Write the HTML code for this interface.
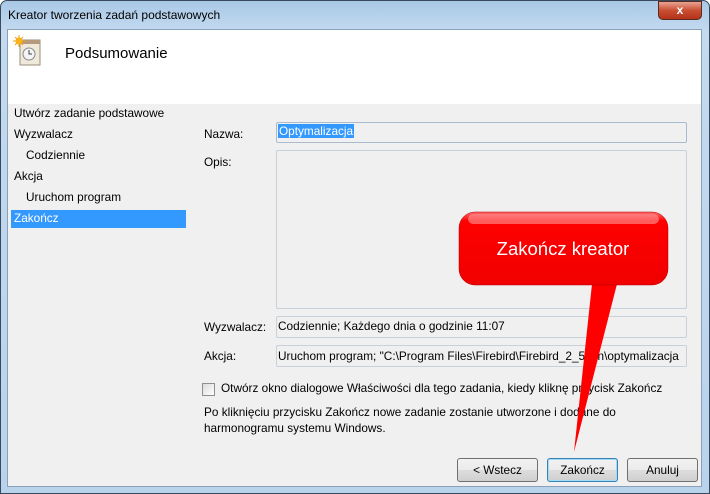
<!DOCTYPE html>
<html><head><meta charset="utf-8"><style>
*{margin:0;padding:0;box-sizing:border-box}
body{width:710px;height:494px;overflow:hidden;font-family:"Liberation Sans","DejaVu Sans",sans-serif;font-size:11.8px;color:#000;background:#fff}
.frame{position:absolute;left:0;top:0;width:710px;height:494px;background:linear-gradient(180deg,#a9c8e6 0,#c3daf0 30px,#b9d3ec 100%);border:1px solid #3a4a5c;border-radius:7px 7px 0 0}
.title{position:absolute;left:7px;top:7px;font-size:12px;color:#000}
.close{position:absolute;left:657px;top:0;width:44px;height:19px;border-radius:0 0 5px 5px;background:linear-gradient(#e8a493,#c94e32 50%,#b3331a);border:1px solid #5a2a20;color:#fff;font-weight:bold;text-align:center;font-size:12px;line-height:17px}
.client{position:absolute;left:7px;top:29px;width:695px;height:458px;background:#f0f0f0;border:1px solid #8aa0b8}
.head{position:absolute;left:0;top:0;width:100%;height:74px;background:#fff}
.t{position:absolute;white-space:nowrap}
.box{position:absolute;border:1px solid #c8d0d8;background:#f0f0f0;border-radius:2px}
.btn{position:absolute;height:24px;border:1px solid #707070;border-radius:3px;background:linear-gradient(#f2f2f2,#ebebeb 50%,#dddddd 51%,#cfcfcf);text-align:center;line-height:22px}
</style></head><body>
<div class="frame">
<div class="title">Kreator tworzenia zadań podstawowych</div>
<div class="close">x</div>
</div>
<div class="client">
<div class="head">
<svg style="position:absolute;left:5px;top:5px" width="30" height="32" viewBox="0 0 30 32">
<rect x="7" y="5" width="20" height="25" fill="#efe9dc" stroke="#9a8d78"/>
<rect x="7" y="5" width="20" height="4" fill="#b39b7b"/>
<circle cx="16" cy="19" r="6" fill="#f4f4f4" stroke="#888"/>
<path d="M16 15v4h3" stroke="#444" fill="none"/>
<circle cx="6" cy="6" r="3.5" fill="#f9b21b"/>
<path d="M6 0v3M6 9v3M0 6h3M9 6h3M2 2l2 2M8 8l2 2M2 10l2-2M8 4l2-2" stroke="#f5a000"/>
</svg>
<div class="t" style="left:57px;top:15px;font-size:15px">Podsumowanie</div>
</div>
<div class="t" style="left:6px;top:76px">Utwórz zadanie podstawowe</div>
<div class="t" style="left:6px;top:97px">Wyzwalacz</div>
<div class="t" style="left:18px;top:118px">Codziennie</div>
<div class="t" style="left:6px;top:139px">Akcja</div>
<div class="t" style="left:18px;top:160px">Uruchom program</div>
<div style="position:absolute;left:3px;top:180px;width:175px;height:18px;background:#3399ff"></div>
<div class="t" style="left:6px;top:181px;color:#fff">Zakończ</div>

<div class="t" style="left:196px;top:97px">Nazwa:</div>
<div class="box" style="left:268px;top:92px;width:411px;height:21px;border-color:#a9bccf"></div>
<div class="t" style="left:270px;top:94px;background:#3399ff;color:#fff;padding:0 1px">Optymalizacja</div>
<div class="t" style="left:196px;top:125px">Opis:</div>
<div class="box" style="left:268px;top:120px;width:411px;height:159px"></div>
<div class="t" style="left:196px;top:290px">Wyzwalacz:</div>
<div class="box" style="left:268px;top:286px;width:411px;height:22px"></div>
<div class="t" style="left:270px;top:289px">Codziennie; Każdego dnia o godzinie 11:07</div>
<div class="t" style="left:196px;top:319px">Akcja:</div>
<div class="box" style="left:268px;top:315px;width:411px;height:22px;overflow:hidden"><div class="t" style="left:1px;top:3px">Uruchom program; "C:\Program Files\Firebird\Firebird_2_5\bin\optymalizacja</div></div>
<div style="position:absolute;left:194px;top:353px;width:13px;height:13px;border:1px solid #8f8f8f;background:linear-gradient(135deg,#dcdcdc,#fff)"></div>
<div class="t" style="left:213px;top:351px">Otwórz okno dialogowe Właściwości dla tego zadania, kiedy kliknę przycisk Zakończ</div>
<div class="t" style="left:196px;top:374px;line-height:16px">Po kliknięciu przycisku Zakończ nowe zadanie zostanie utworzone i dodane do<br>harmonogramu systemu Windows.</div>
<div class="btn" style="left:449px;top:428px;width:81px">&lt; Wstecz</div>
<div class="btn" style="left:539px;top:428px;width:71px;border-color:#3c7fb1;box-shadow:inset 0 0 0 1px #9fdcf8">Zakończ</div>
<div class="btn" style="left:619px;top:428px;width:71px">Anuluj</div>
</div>
<svg style="position:absolute;left:0;top:0" width="710" height="494">
<defs><linearGradient id="g" x1="0" y1="0" x2="0" y2="1"><stop offset="0" stop-color="#ff6a6a"/><stop offset="0.12" stop-color="#ff0000"/><stop offset="1" stop-color="#f00000"/></linearGradient></defs>
<path d="M592 284 L574 452 L617 284 Z" fill="#ff0000"/>
<rect x="459" y="212" width="209" height="73" rx="16" fill="url(#g)" stroke="#b00000" stroke-width="0.5"/>
<rect x="468" y="214" width="191" height="10" rx="5" fill="#ff9a9a" opacity="0.6"/>
<text x="563" y="255" text-anchor="middle" font-family="Liberation Sans, sans-serif" font-size="18.5" fill="#fff">Zakończ kreator</text>
</svg>
</body></html>
